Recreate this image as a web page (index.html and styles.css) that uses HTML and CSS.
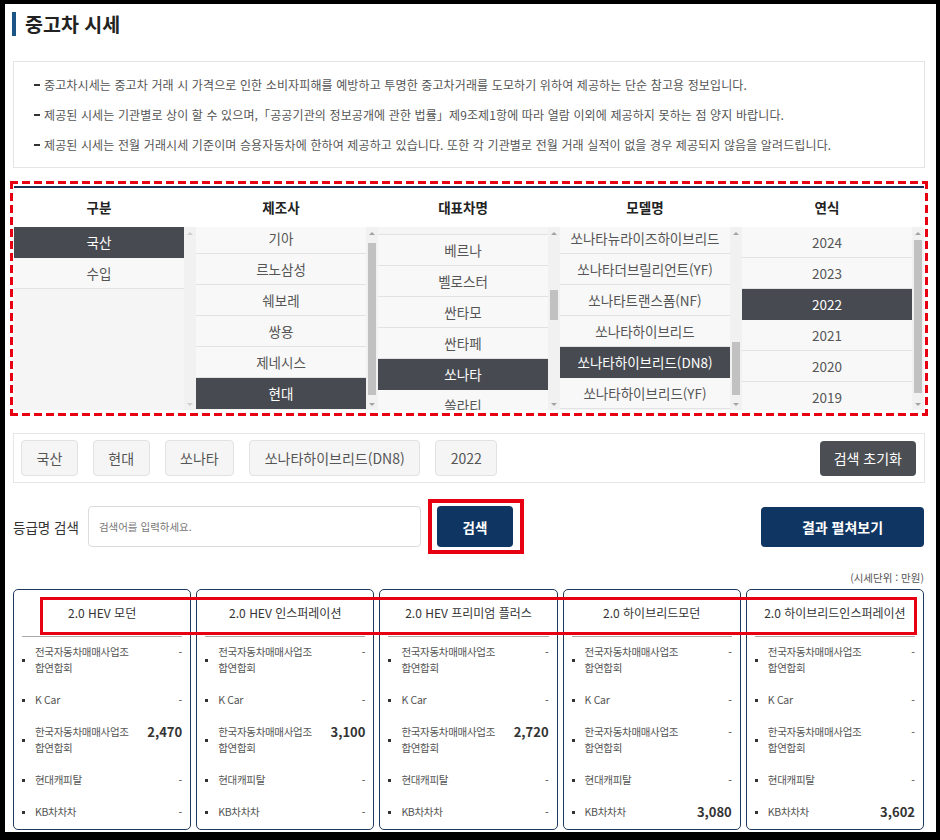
FILE: index.html
```html
<!DOCTYPE html>
<html lang="ko">
<head>
<meta charset="utf-8">
<title>중고차 시세</title>
<link rel="stylesheet" href="styles.css">
</head>
<body>
<div class="frame">
  <h1 class="title">중고차 시세</h1>

  <ul class="notice">
    <li>중고차시세는 중고차 거래 시 가격으로 인한 소비자피해를 예방하고 투명한 중고차거래를 도모하기 위하여 제공하는 단순 참고용 정보입니다.</li>
    <li>제공된 시세는 기관별로 상이 할 수 있으며,「공공기관의 정보공개에 관한 법률」제9조제1항에 따라 열람 이외에 제공하지 못하는 점 양지 바랍니다.</li>
    <li>제공된 시세는 전월 거래시세 기준이며 승용자동차에 한하여 제공하고 있습니다. 또한 각 기관별로 전월 거래 실적이 없을 경우 제공되지 않음을 알려드립니다.</li>
  </ul>

  <div class="picker-mark">
    <div class="picker">
      <section class="col">
        <h2 class="col-head">구분</h2>
        <div class="col-body">
          <div class="list"><ul class="items">
            <li class="sel">국산</li>
            <li>수입</li>
          </ul></div>
          <div class="sbar off"><span class="arr up"></span><span class="track"></span><span class="arr down"></span></div>
        </div>
      </section>
      <section class="col">
        <h2 class="col-head">제조사</h2>
        <div class="col-body">
          <div class="list"><ul class="items shift-a">
            <li>기아</li>
            <li>르노삼성</li>
            <li>쉐보레</li>
            <li>쌍용</li>
            <li>제네시스</li>
            <li class="sel">현대</li>
          </ul></div>
          <div class="sbar"><span class="arr up"></span><span class="track"><span class="thumb t2"></span></span><span class="arr down"></span></div>
        </div>
      </section>
      <section class="col">
        <h2 class="col-head">대표차명</h2>
        <div class="col-body">
          <div class="list"><ul class="items shift-b">
            <li>베르나</li>
            <li>벨로스터</li>
            <li>싼타모</li>
            <li>싼타페</li>
            <li class="sel">쏘나타</li>
            <li>쏠라티</li>
          </ul></div>
          <div class="sbar"><span class="arr up"></span><span class="track"><span class="thumb t3"></span></span><span class="arr down"></span></div>
        </div>
      </section>
      <section class="col">
        <h2 class="col-head">모델명</h2>
        <div class="col-body">
          <div class="list"><ul class="items shift-a">
            <li>쏘나타뉴라이즈하이브리드</li>
            <li>쏘나타더브릴리언트(YF)</li>
            <li>쏘나타트랜스폼(NF)</li>
            <li>쏘나타하이브리드</li>
            <li class="sel">쏘나타하이브리드(DN8)</li>
            <li>쏘나타하이브리드(YF)</li>
          </ul></div>
          <div class="sbar"><span class="arr up"></span><span class="track"><span class="thumb t4"></span></span><span class="arr down"></span></div>
        </div>
      </section>
      <section class="col">
        <h2 class="col-head">연식</h2>
        <div class="col-body">
          <div class="list"><ul class="items">
            <li>2024</li>
            <li>2023</li>
            <li class="sel">2022</li>
            <li>2021</li>
            <li>2020</li>
            <li>2019</li>
          </ul></div>
          <div class="sbar"><span class="arr up"></span><span class="track"><span class="thumb t5"></span></span><span class="arr down"></span></div>
        </div>
      </section>
    </div>
  </div>

  <div class="chips">
    <span class="chip">국산</span>
    <span class="chip">현대</span>
    <span class="chip">쏘나타</span>
    <span class="chip">쏘나타하이브리드(DN8)</span>
    <span class="chip">2022</span>
    <button class="reset" type="button">검색 초기화</button>
  </div>

  <div class="search">
    <label class="search-label" for="q">등급명 검색</label>
    <input class="search-input" id="q" type="text" placeholder="검색어를 입력하세요.">
    <div class="btn-mark"><button class="btn-search" type="button">검색</button></div>
    <button class="btn-expand" type="button">결과 펼쳐보기</button>
  </div>

  <p class="unit">(시세단위 : 만원)</p>

  <div class="cards">
    <article class="card">
      <h3 class="card-title">2.0 HEV 모던</h3>
      <ul class="rows">
        <li><span class="lbl">전국자동차매매사업조<br>합연합회</span><span class="val">-</span></li>
        <li><span class="lbl">K Car</span><span class="val">-</span></li>
        <li><span class="lbl">한국자동차매매사업조<br>합연합회</span><span class="val num">2,470</span></li>
        <li><span class="lbl">현대캐피탈</span><span class="val">-</span></li>
        <li><span class="lbl">KB차차차</span><span class="val">-</span></li>
      </ul>
    </article>
    <article class="card">
      <h3 class="card-title">2.0 HEV 인스퍼레이션</h3>
      <ul class="rows">
        <li><span class="lbl">전국자동차매매사업조<br>합연합회</span><span class="val">-</span></li>
        <li><span class="lbl">K Car</span><span class="val">-</span></li>
        <li><span class="lbl">한국자동차매매사업조<br>합연합회</span><span class="val num">3,100</span></li>
        <li><span class="lbl">현대캐피탈</span><span class="val">-</span></li>
        <li><span class="lbl">KB차차차</span><span class="val">-</span></li>
      </ul>
    </article>
    <article class="card">
      <h3 class="card-title">2.0 HEV 프리미엄 플러스</h3>
      <ul class="rows">
        <li><span class="lbl">전국자동차매매사업조<br>합연합회</span><span class="val">-</span></li>
        <li><span class="lbl">K Car</span><span class="val">-</span></li>
        <li><span class="lbl">한국자동차매매사업조<br>합연합회</span><span class="val num">2,720</span></li>
        <li><span class="lbl">현대캐피탈</span><span class="val">-</span></li>
        <li><span class="lbl">KB차차차</span><span class="val">-</span></li>
      </ul>
    </article>
    <article class="card">
      <h3 class="card-title">2.0 하이브리드모던</h3>
      <ul class="rows">
        <li><span class="lbl">전국자동차매매사업조<br>합연합회</span><span class="val">-</span></li>
        <li><span class="lbl">K Car</span><span class="val">-</span></li>
        <li><span class="lbl">한국자동차매매사업조<br>합연합회</span><span class="val">-</span></li>
        <li><span class="lbl">현대캐피탈</span><span class="val">-</span></li>
        <li><span class="lbl">KB차차차</span><span class="val num">3,080</span></li>
      </ul>
    </article>
    <article class="card">
      <h3 class="card-title">2.0 하이브리드인스퍼레이션</h3>
      <ul class="rows">
        <li><span class="lbl">전국자동차매매사업조<br>합연합회</span><span class="val">-</span></li>
        <li><span class="lbl">K Car</span><span class="val">-</span></li>
        <li><span class="lbl">한국자동차매매사업조<br>합연합회</span><span class="val">-</span></li>
        <li><span class="lbl">현대캐피탈</span><span class="val">-</span></li>
        <li><span class="lbl">KB차차차</span><span class="val num">3,602</span></li>
      </ul>
    </article>
    <div class="title-mark"></div>
  </div>
</div>
</body>
</html>
```
FILE: styles.css
```css
* { box-sizing: border-box; margin: 0; padding: 0; }

body {
  background: #000;
  font-family: "Noto Sans CJK KR", "Noto Sans", sans-serif;
  color: #333;
}

.frame {
  margin: 4px 4px 0 5px;
  height: 828px;
  background: #fff;
  padding: 8px 11px 0 8px;
  overflow: hidden;
}

/* title */
.title {
  font-size: 19.5px;
  font-weight: 700;
  line-height: 24px;
  color: #222;
  border-left: 4px solid #1d5486;
  padding-left: 9px;
  margin-left: -1px;
}

/* notice */
.notice {
  list-style: none;
  margin-top: 25px;
  border: 1px solid #e4e4e4;
  padding: 8px 20px 7px;
}
.notice li {
  display: flex;
  align-items: center;
  font-size: 12px;
  line-height: 30px;
  letter-spacing: 0.12px;
  color: #555;
  white-space: nowrap;
}
.notice li::before {
  content: "";
  width: 6px;
  height: 2px;
  background: #333;
  margin-right: 4px;
  flex: none;
}

/* picker */
.picker-mark {
  margin: 13px -3px 0 -3px;
  padding: 5px 4px 6px 4px;
  background:
    repeating-linear-gradient(90deg, #e60012 0 8px, transparent 8px 12px) top left / 100% 3px no-repeat,
    repeating-linear-gradient(90deg, #e60012 0 8px, transparent 8px 12px) bottom left / 100% 3px no-repeat,
    repeating-linear-gradient(180deg, #e60012 0 8px, transparent 8px 12px) top left / 3px 100% no-repeat,
    repeating-linear-gradient(180deg, #e60012 0 8px, transparent 8px 12px) top right / 3px 100% no-repeat;
}
.picker {
  border-top: 2px solid #1a3354;
  display: grid;
  grid-template-columns: repeat(5, 1fr);
}
.col-head {
  font-size: 13.5px;
  font-weight: 700;
  height: 39px;
  line-height: 39px;
  text-align: center;
  color: #222;
  padding-right: 12px;
}
.col-body {
  display: flex;
  height: 183px;
  background: #f5f5f5;
}
.list {
  flex: 1;
  overflow: hidden;
}
.items { list-style: none; }
.items.shift-a { margin-top: -4px; }
.items.shift-b { margin-top: 7px; border-top: 1px solid #e2e2e2; }
.items li {
  height: 31px;
  line-height: 30px;
  border-bottom: 1px solid #e2e2e2;
  text-align: center;
  font-size: 13.5px;
  color: #555;
  background: #f8f8f8;
  white-space: nowrap;
}
.items li.sel {
  background: #474b51;
  border-bottom-color: #474b51;
  color: #fff;
}

.sbar {
  width: 12px;
  display: flex;
  flex-direction: column;
  background: #f1f1f1;
}
.arr {
  height: 12px;
  display: flex;
  align-items: center;
  justify-content: center;
}
.arr.up::before {
  content: "";
  border-left: 3px solid transparent;
  border-right: 3px solid transparent;
  border-bottom: 3px solid #a3a3a3;
}
.arr.down::before {
  content: "";
  border-left: 3px solid transparent;
  border-right: 3px solid transparent;
  border-top: 3px solid #a3a3a3;
}
.sbar.off .arr.up::before { border-bottom-color: #cfcfcf; }
.sbar.off .arr.down::before { border-top-color: #cfcfcf; }
.track {
  flex: 1;
  padding: 0 2px;
}
.thumb {
  display: block;
  background: #c1c1c1;
}
.thumb.t2 { margin-top: 4px; height: 152px; }
.thumb.t3 { margin-top: 51px; height: 30px; }
.thumb.t4 { margin-top: 103px; height: 53px; }
.thumb.t5 { margin-top: 1px; height: 153px; }

/* chips */
.chips {
  margin-top: 17px;
  height: 50px;
  border: 1px solid #e6e6e6;
  padding: 0 8px 0 7px;
  display: flex;
  align-items: center;
  gap: 15px;
}
.chip {
  height: 36px;
  padding: 0 14.5px;
  border: 1px solid #e2e2e2;
  border-radius: 4px;
  background: #f5f5f5;
  font-size: 14px;
  color: #555;
  display: flex;
  align-items: center;
  white-space: nowrap;
}
.reset {
  margin-left: auto;
  height: 35px;
  padding: 0 14px;
  border: none;
  border-radius: 4px;
  background: #4b4e53;
  color: #fff;
  font-family: inherit;
  font-size: 14px;
}

/* search */
.search {
  margin-top: 16px;
  display: flex;
  align-items: center;
}
.search-label {
  font-size: 13.5px;
  color: #333;
  margin-right: 9px;
  white-space: nowrap;
}
.search-input {
  width: 333px;
  height: 41px;
  border: 1px solid #dcdcdc;
  border-radius: 4px;
  padding: 0 10px;
  font-family: inherit;
  font-size: 10.5px;
  color: #333;
  outline: none;
}
.search-input::placeholder { color: #777; }
.btn-mark {
  margin-left: 7px;
  border: 4px solid #e60012;
  padding: 3px 7px 3px 5px;
}
.btn-search {
  display: block;
  width: 76px;
  height: 41px;
  border: none;
  border-radius: 4px;
  background: #0f3562;
  color: #fff;
  font-family: inherit;
  font-size: 13.5px;
  font-weight: 700;
}
.btn-expand {
  margin-left: auto;
  margin-right: 1px;
  width: 163px;
  height: 40px;
  border: none;
  border-radius: 4px;
  background: #0f3562;
  color: #fff;
  font-family: inherit;
  font-size: 14px;
  font-weight: 700;
}

.unit {
  margin-top: 17px;
  margin-right: 1px;
  text-align: right;
  font-size: 10.5px;
  line-height: 14px;
  color: #555;
}

/* cards */
.cards {
  position: relative;
  margin-top: 4px;
  margin-right: 1px;
  display: grid;
  grid-template-columns: repeat(5, 1fr);
  gap: 5px;
}
.card {
  height: 241px;
  border: 1px solid #1f3a5a;
  border-radius: 5px;
  padding: 0 8px;
}
.card-title {
  height: 47px;
  line-height: 46px;
  border-bottom: 1px solid #a9a9a9;
  text-align: center;
  font-size: 12px;
  font-weight: 400;
  color: #333;
  white-space: nowrap;
}
.rows { list-style: none; }
.rows li {
  display: flex;
  align-items: flex-start;
  padding: 7px 0 9px;
  font-size: 10.5px;
  line-height: 16px;
}
.rows li::before {
  content: "";
  flex: none;
  width: 3px;
  height: 3px;
  background: #333;
  align-self: center;
  margin-right: 10px;
}
.lbl {
  flex: 1;
  color: #555;
  letter-spacing: -0.3px;
  white-space: nowrap;
}
.val {
  color: #444;
}
.val.num {
  font-size: 13px;
  font-weight: 700;
  color: #333;
}

.title-mark {
  position: absolute;
  left: 27px;
  top: 8px;
  width: 877px;
  height: 38px;
  border: 3.5px solid #e60012;
  pointer-events: none;
}
```
